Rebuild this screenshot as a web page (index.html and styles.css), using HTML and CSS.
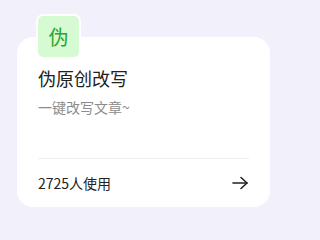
FILE: index.html
```html
<!DOCTYPE html>
<html lang="zh">
<head>
<meta charset="utf-8">
<link rel="stylesheet" href="styles.css">
</head>
<body>
<div class="page">
  <div class="card">
    <div class="icon-box"><span class="icon-char">伪</span></div>
    <div class="title">伪原创改写</div>
    <div class="subtitle">一键改写文章~</div>
    <div class="footer">
      <span class="count">2725人使用</span>
      <svg class="arrow" width="18" height="14" viewBox="0 0 18 14" fill="none" stroke="#222" stroke-width="1.6" stroke-linecap="round" stroke-linejoin="round">
        <path d="M2 7 H16"/>
        <path d="M10 1.5 L16 7 L10 12.5"/>
      </svg>
    </div>
  </div>
</div>
</body>
</html>
```

FILE: styles.css
```css
html, body {
  margin: 0;
  padding: 0;
  background: #f1f0fb;
  font-family: "Noto Sans CJK SC", "Noto Sans", sans-serif;
}
.page {
  width: 285px;
  height: 230px;
  padding: 37px 15px 0 17px;
  box-sizing: border-box;
}
.card {
  background: #ffffff;
  border-radius: 16px;
  height: 170px;
  padding: 0 21px;
  box-sizing: border-box;
  display: flex;
  flex-direction: column;
}
.icon-box {
  width: 41px;
  height: 41px;
  margin-top: -23px;
  margin-left: -2px;
  border: 2px solid #ffffff;
  border-radius: 7px;
  background: #d6fbd3;
  display: flex;
  align-items: center;
  justify-content: center;
}
.icon-char {
  color: #2aa532;
  font-size: 20px;
  line-height: 1;
}
.title {
  margin-top: 6px;
  font-size: 18px;
  line-height: 26px;
  color: #222;
}
.subtitle {
  margin-top: 6px;
  font-size: 14px;
  line-height: 20px;
  color: #8c8c8c;
}
.footer {
  margin-top: auto;
  border-top: 1px solid #eeeef2;
  height: 48px;
  display: flex;
  align-items: center;
  justify-content: space-between;
}
.count {
  font-size: 14px;
  color: #222;
}
.arrow {
  display: block;
}
```
